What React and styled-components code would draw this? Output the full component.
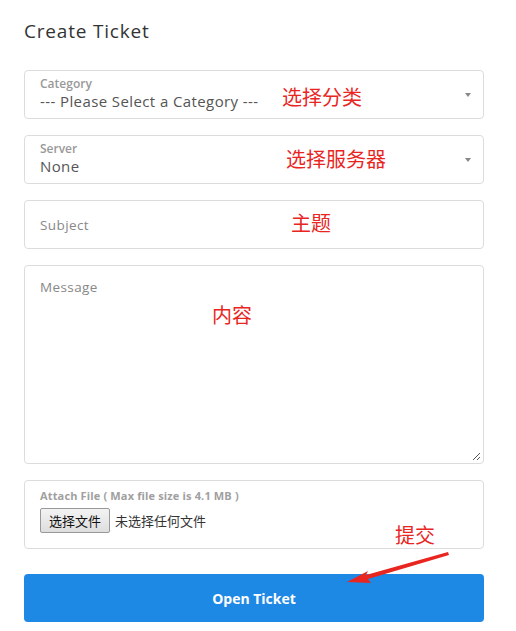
import styled, { createGlobalStyle } from "styled-components";

const Global = createGlobalStyle`
  body {
    margin: 0;
    background: #fff;
    font-family: "Open Sans", "Noto Sans CJK SC", sans-serif;
  }
`;

function App() {
  return (
    <Page>
      <Global />
      <Title>Create Ticket</Title>
      <Form>
        <Field>
          <SmallLabel>Category</SmallLabel>
          <Value>--- Please Select a Category ---</Value>
          <Caret />
          <Note style={{ left: 257, top: 14 }}>选择分类</Note>
        </Field>
        <Field>
          <SmallLabel>Server</SmallLabel>
          <Value>None</Value>
          <Caret />
          <Note style={{ left: 261, top: 11 }}>选择服务器</Note>
        </Field>
        <Field center>
          <Placeholder>Subject</Placeholder>
          <Note style={{ left: 266, top: 10 }}>主题</Note>
        </Field>
        <Field tall>
          <Placeholder>Message</Placeholder>
          <Note style={{ left: 187, top: 37 }}>内容</Note>
          <Grip width="9" height="9" viewBox="0 0 9 9">
            <path d="M8 1 L1 8 M8 5 L5 8" stroke="#555" strokeWidth="1" />
          </Grip>
        </Field>
        <FileField>
          <FileLabel>Attach File ( Max file size is 4.1 MB )</FileLabel>
          <FileRow>
            <FileButton>选择文件</FileButton>
            <FileStatus>未选择任何文件</FileStatus>
          </FileRow>
          <Note style={{ left: 370, top: 42 }}>提交</Note>
        </FileField>
        <Submit>
          Open Ticket
          <Arrow width="110" height="50" viewBox="0 0 110 50">
            <path d="M104 2 L22 25 L24 21 L3 32 L27 33 L24 29 L105 5 Z" fill="#e8261f" />
          </Arrow>
        </Submit>
      </Form>
    </Page>
  );
}

export default App;

const Page = styled.div`
  padding: 17px 32px 0 24px;
  width: 460px;
`;

const Title = styled.h1`
  margin: 0 0 25px;
  font-size: 19px;
  font-weight: 500;
  color: #333;
  letter-spacing: 0.8px;
  line-height: 28px;
`;

const Form = styled.div`
  display: flex;
  flex-direction: column;
  gap: 16px;
`;

const Field = styled.div`
  position: relative;
  box-sizing: border-box;
  height: ${(p) => (p.tall ? "199px" : "49px")};
  border: 1px solid #dcdcdc;
  border-radius: 4px;
  padding: ${(p) => (p.center ? "0 15px" : p.tall ? "11px 15px" : "5px 15px")};
  display: flex;
  flex-direction: column;
  justify-content: ${(p) => (p.center ? "center" : "flex-start")};
`;

const SmallLabel = styled.div`
  font-size: 12px;
  font-weight: 600;
  color: #999;
  line-height: 16px;
`;

const Value = styled.div`
  font-size: 15px;
  color: #555;
  line-height: 19px;
  letter-spacing: 0.4px;
`;

const Placeholder = styled.div`
  font-size: 13.5px;
  color: #888;
  line-height: 20px;
  letter-spacing: 0.4px;
`;

const Caret = styled.span`
  position: absolute;
  right: 12px;
  top: 22px;
  width: 0;
  height: 0;
  border-left: 3.5px solid transparent;
  border-right: 3.5px solid transparent;
  border-top: 4px solid #888;
`;

const Note = styled.span`
  position: absolute;
  font-family: "Noto Sans CJK SC", sans-serif;
  font-size: 20px;
  color: #e8261f;
  line-height: 24px;
  pointer-events: none;
`;

const Grip = styled.svg`
  position: absolute;
  right: 2px;
  bottom: 2px;
`;

const FileField = styled.div`
  position: relative;
  box-sizing: border-box;
  height: 69px;
  border: 1px solid #dcdcdc;
  border-radius: 4px;
  padding: 8px 15px;
  display: flex;
  flex-direction: column;
  gap: 5px;
`;

const FileLabel = styled.div`
  font-size: 11px;
  font-weight: 700;
  color: #a0a0a0;
  line-height: 14px;
  letter-spacing: 0.15px;
`;

const FileRow = styled.div`
  display: flex;
  align-items: center;
  gap: 5px;
`;

const FileButton = styled.button`
  font-family: "Noto Sans CJK SC", sans-serif;
  font-size: 13px;
  color: #111;
  height: 25px;
  padding: 0 8px;
  border: 1px solid #999;
  border-radius: 2px;
  background: linear-gradient(#f3f3f3, #dedede);
`;

const FileStatus = styled.span`
  font-family: "Noto Sans CJK SC", sans-serif;
  font-size: 13px;
  color: #333;
`;

const Submit = styled.button`
  position: relative;
  margin-top: 9px;
  height: 48px;
  border: none;
  border-radius: 4px;
  background: #1e88e5;
  color: #fff;
  font-family: "Open Sans", sans-serif;
  font-size: 14px;
  font-weight: 700;
`;

const Arrow = styled.svg`
  position: absolute;
  left: 320px;
  top: -24px;
`;
